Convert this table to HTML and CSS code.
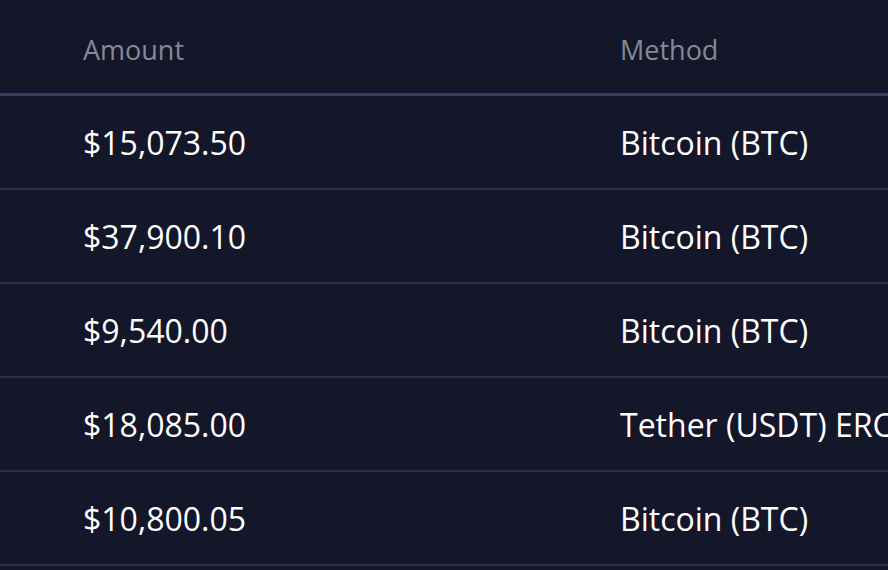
FILE: index.html
```html
<!DOCTYPE html>
<html lang="en">
<head>
    <meta charset="UTF-8">
    <meta name="viewport" content="width=device-width, initial-scale=1.0">
    <title>Withdrawals</title>
    <link rel="stylesheet" href="styles.css">
</head>
<body>
    <table class="history">
        <thead>
            <tr>
                <th class="gutter"></th>
                <th class="col-amount">Amount</th>
                <th class="col-method">Method</th>
            </tr>
        </thead>
        <tbody>
            <tr>
                <td class="gutter"></td>
                <td>$15,073.50</td>
                <td>Bitcoin (BTC)</td>
            </tr>
            <tr>
                <td class="gutter"></td>
                <td>$37,900.10</td>
                <td>Bitcoin (BTC)</td>
            </tr>
            <tr>
                <td class="gutter"></td>
                <td>$9,540.00</td>
                <td>Bitcoin (BTC)</td>
            </tr>
            <tr>
                <td class="gutter"></td>
                <td>$18,085.00</td>
                <td>Tether (USDT) ERC20</td>
            </tr>
            <tr>
                <td class="gutter"></td>
                <td>$10,800.05</td>
                <td>Bitcoin (BTC)</td>
            </tr>
        </tbody>
    </table>
</body>
</html>
```
FILE: styles.css
```css
html, body {
    margin: 0;
    padding: 0;
    background-color: #14162a;
    overflow: hidden;
}
body {
    font-family: "Open Sans", "Noto Sans", sans-serif;
    width: 888px;
    height: 570px;
}
.history {
    border-collapse: collapse;
    width: 1100px;
    table-layout: fixed;
}
.history th,
.history td {
    text-align: left;
    padding: 0;
    white-space: nowrap;
}
.history th {
    height: 87px;
    padding-top: 6px;
    font-size: 27px;
    font-weight: 400;
    color: #868994;
    border-bottom: 3px solid #393c60;
}
.history td {
    height: 92px;
    font-size: 32px;
    font-weight: 500;
    color: #ffffff;
    border-bottom: 2px solid #2a2d47;
}
.history .gutter {
    width: 83px;
}
.col-amount {
    width: 537px;
}
```
